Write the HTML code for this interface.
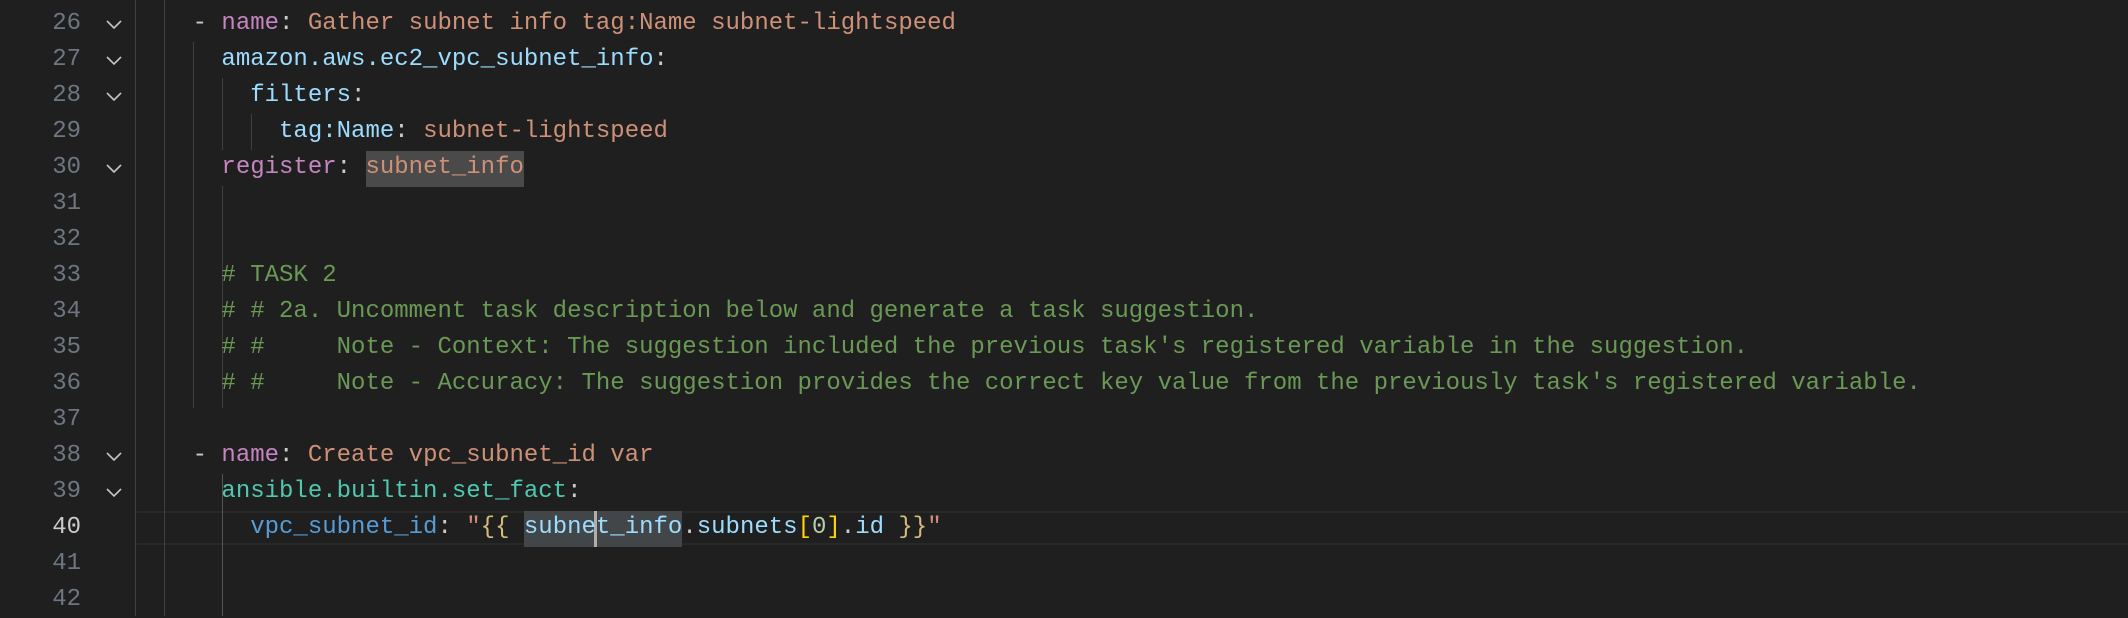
<!DOCTYPE html>
<html><head><meta charset="utf-8"><style>
body{margin:0;width:2128px;height:616px;background:#1f1f1f;overflow:hidden;position:relative;font-family:"Liberation Mono",monospace;font-size:24px}
.ln{position:absolute;left:0;width:81px;text-align:right;color:#6e7681;line-height:36px;height:36px}
.fd{position:absolute;left:104px;width:20px;height:36px}
.c{position:absolute;left:135px;line-height:36px;height:36px;white-space:pre;color:#cccccc}
.g{position:absolute;width:1px;background:#404040}
.k{color:#c586c0}.s{color:#ce9178}.b{color:#9cdcfe}.t{color:#4ec9b0}.cm{color:#6a9955}.v{color:#569cd6}.y{color:#d7ba7d}.br{color:#ffd700}.n{color:#b5cea8}
.hl{background:#4a4a4a}.sel{background:#434649}
</style></head><body>
<div style="position:absolute;left:137px;top:511px;width:1991px;height:34px;border-top:2px solid #282828;border-bottom:2px solid #282828;box-sizing:border-box"></div>
<div style="position:absolute;left:366px;top:151px;width:158px;height:36px;background:#4a4a4a"></div>
<div style="position:absolute;left:524px;top:511px;width:158px;height:36px;background:#434649"></div>
<div style="position:absolute;left:594px;top:511px;width:3px;height:36px;background:#aeafad"></div>
<div class="g" style="left:135px;top:0;height:616px"></div>
<div class="g" style="left:164px;top:0;height:616px"></div>
<div class="g" style="left:193px;top:42px;height:366px"></div>
<div class="g" style="left:222px;top:78px;height:72px"></div>
<div class="g" style="left:251px;top:114px;height:36px"></div>
<div class="g" style="left:222px;top:186px;height:222px"></div>
<div class="g" style="left:222px;top:474px;height:142px;background:#555"></div>
<div id="L"></div>
<script>
const lines=[
[26,1,'    - <span class="k">name</span>: <span class="s">Gather subnet info tag:Name subnet-lightspeed</span>'],
[27,1,'      <span class="b">amazon.aws.ec2_vpc_subnet_info</span>:'],
[28,1,'        <span class="b">filters</span>:'],
[29,0,'          <span class="b">tag:Name</span>: <span class="s">subnet-lightspeed</span>'],
[30,1,'      <span class="k">register</span>: <span class="s">subnet_info</span>'],
[31,0,''],[32,0,''],
[33,0,'      <span class="cm"># TASK 2</span>'],
[34,0,'      <span class="cm"># # 2a. Uncomment task description below and generate a task suggestion.</span>'],
[35,0,'      <span class="cm"># #     Note - Context: The suggestion included the previous task\'s registered variable in the suggestion.</span>'],
[36,0,'      <span class="cm"># #     Note - Accuracy: The suggestion provides the correct key value from the previously task\'s registered variable.</span>'],
[37,0,''],
[38,1,'    - <span class="k">name</span>: <span class="s">Create vpc_subnet_id var</span>'],
[39,1,'      <span class="t">ansible.builtin.set_fact</span>:'],
[40,0,'        <span class="v">vpc_subnet_id</span>: <span class="s">"</span><span class="y">{{</span> <span class="b">subnet_info</span>.<span class="b">subnets</span><span class="br">[</span><span class="n">0</span><span class="br">]</span>.<span class="b">id</span> <span class="y">}}</span><span class="s">"</span>'],
[41,0,''],[42,0,'']];
let h='';
for(const [n,f,c] of lines){const t=6+(n-26)*36;
h+=`<div class="ln" style="top:${t}px;${n==40?'color:#cccccc':''}">${n}</div>`;
if(f)h+=`<svg class="fd" style="top:${t}px" viewBox="0 0 20 36"><path d="M3 15 L10 22 L17 15" fill="none" stroke="#c5c5c5" stroke-width="1.6"/></svg>`;
h+=`<div class="c" style="top:${t}px">${c}</div>`;}
document.getElementById('L').innerHTML=h;
</script>
</body></html>
